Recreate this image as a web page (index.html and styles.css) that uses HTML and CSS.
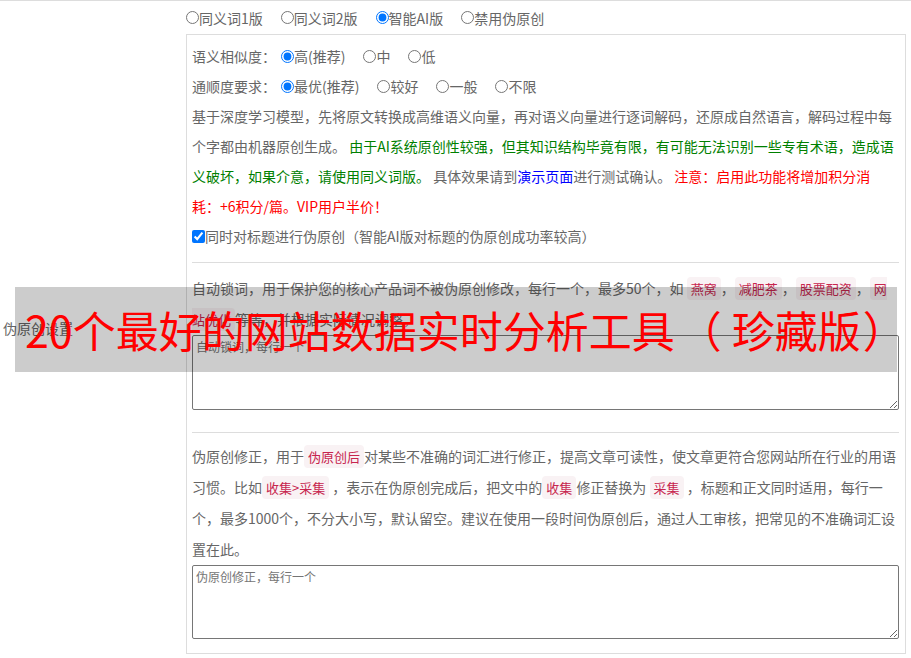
FILE: index.html
```html
<!DOCTYPE html>
<html lang="zh-CN">
<head>
<meta charset="utf-8">
<title>伪原创设置</title>
<link rel="stylesheet" href="styles.css">
</head>
<body>
<div class="form-row">
  <div class="row-label">伪原创设置</div>
  <div class="row-field">
    <div class="modes">
      <label class="opt"><input type="radio" name="mode">同义词1版</label>
      <label class="opt"><input type="radio" name="mode">同义词2版</label>
      <label class="opt"><input type="radio" name="mode" checked>智能AI版</label>
      <label class="opt"><input type="radio" name="mode">禁用伪原创</label>
    </div>
    <div class="panel">
      <div class="line">
        <span class="line-label">语义相似度：</span>
        <label class="opt"><input type="radio" name="sim" checked>高(推荐)</label>
        <label class="opt"><input type="radio" name="sim">中</label>
        <label class="opt"><input type="radio" name="sim">低</label>
      </div>
      <div class="line">
        <span class="line-label">通顺度要求：</span>
        <label class="opt"><input type="radio" name="flu" checked>最优(推荐)</label>
        <label class="opt"><input type="radio" name="flu">较好</label>
        <label class="opt"><input type="radio" name="flu">一般</label>
        <label class="opt"><input type="radio" name="flu">不限</label>
      </div>
      <p class="desc">基于深度学习模型，先将原文转换成高维语义向量，再对语义向量进行逐词解码，还原成自然语言，解码过程中每个字都由机器原创生成。 <span class="green">由于AI系统原创性较强，但其知识结构毕竟有限，有可能无法识别一些专有术语，造成语义破坏，如果介意，请使用同义词版。</span> 具体效果请到<a class="demo" href="#">演示页面</a>进行测试确认。 <span class="red">注意：启用此功能将增加积分消<br>耗：+6积分/篇。VIP用户半价！</span></p>
      <label class="line check"><input type="checkbox" checked>同时对标题进行伪原创（智能AI版对标题的伪原创成功率较高）</label>
      <hr class="sep first">
      <p class="desc tall">自动锁词，用于保护您的核心产品词不被伪原创修改，每行一个，最多50个，如 <code>燕窝</code>，<code>减肥茶</code>，<code>股票配资</code>，<code>网站优化</code>等等，并根据实际情况调整。</p>
      <textarea class="box lock" placeholder="自动锁词，每行一个"></textarea>
      <hr class="sep second">
      <p class="desc tall">伪原创修正，用于<code>伪原创后</code>对某些不准确的词汇进行修正，提高文章可读性，使文章更符合您网站所在行业的用语习惯。比如<code>收集&gt;采集</code> ，表示在伪原创完成后，把文中的<code>收集</code>修正替换为 <code>采集</code> ，标题和正文同时适用，每行一个，最多1000个，不分大小写，默认留空。建议在使用一段时间伪原创后，通过人工审核，把常见的不准确词汇设置在此。</p>
      <textarea class="box fix" placeholder="伪原创修正，每行一个"></textarea>
    </div>
  </div>
</div>
<div class="banner">20个最好的网站数据实时分析工具<span class="paren-open">（</span>珍藏版<span class="paren-close">）</span></div>
</body>
</html>
```

FILE: styles.css
```css
html, body {
  margin: 0;
  padding: 0;
  background: #fff;
}

body {
  font-family: "Noto Sans CJK SC", "Liberation Sans", sans-serif;
  font-size: 14px;
  color: #666;
  width: 911px;
  position: relative;
}

.form-row {
  display: flex;
  align-items: center;
  border-top: 1px solid #ddd;
  padding-bottom: 4px;
}

.row-label {
  width: 183px;
  padding-left: 3px;
  color: #666;
  line-height: 20px;
}

.row-field {
  width: 720px;
}

.modes {
  height: 33px;
  display: flex;
  align-items: center;
}

.opt {
  display: inline-flex;
  align-items: center;
  margin-right: 18px;
  line-height: 20px;
  color: #666;
}

.opt input {
  margin: 0;
  width: 13px;
  height: 13px;
}

.panel {
  border: 1px solid #ddd;
  padding: 6px 6px 14px 5px;
}

.line {
  height: 30px;
  display: flex;
  align-items: center;
}

.line-label {
  margin-right: 5px;
}

.desc {
  margin: 0;
  line-height: 30px;
  color: #666;
}

.desc.tall {
  line-height: 31px;
}

.green {
  color: #008000;
}

.red {
  color: #ff0000;
}

.demo {
  color: #0000ff;
  text-decoration: none;
}

.check input {
  margin: 0;
  width: 13px;
  height: 13px;
}

.sep {
  border: 0;
  border-top: 1px solid #ddd;
  height: 0;
}

.sep.first {
  margin: 11px 0 10px;
}

.sep.second {
  margin: 22px 0 8px;
}

code {
  font-family: "Noto Sans CJK SC", sans-serif;
  font-size: 13px;
  color: #c7254e;
  background: #f9f2f4;
  border-radius: 4px;
  padding: 2px 4px;
}

.box {
  display: block;
  box-sizing: border-box;
  width: 100%;
  margin: 0;
  padding: 2px 3px;
  font-family: "Noto Sans CJK SC", sans-serif;
  font-size: 12px;
  line-height: 17px;
  border: 1px solid #767676;
  border-radius: 2px;
  color: #333;
}

.box::placeholder {
  color: #757575;
}

.box.lock {
  height: 75px;
}

.box.fix {
  height: 74px;
}

.banner {
  position: absolute;
  left: 15px;
  top: 287px;
  width: 872px;
  height: 85px;
  padding-left: 10px;
  background: rgba(0, 0, 0, 0.2);
  color: #ff0000;
  font-size: 43px;
  line-height: 85px;
  white-space: nowrap;
}

.paren-open {
  margin-left: 4px;
  margin-right: 10px;
}

.paren-close {
  margin-left: 2px;
}
```
